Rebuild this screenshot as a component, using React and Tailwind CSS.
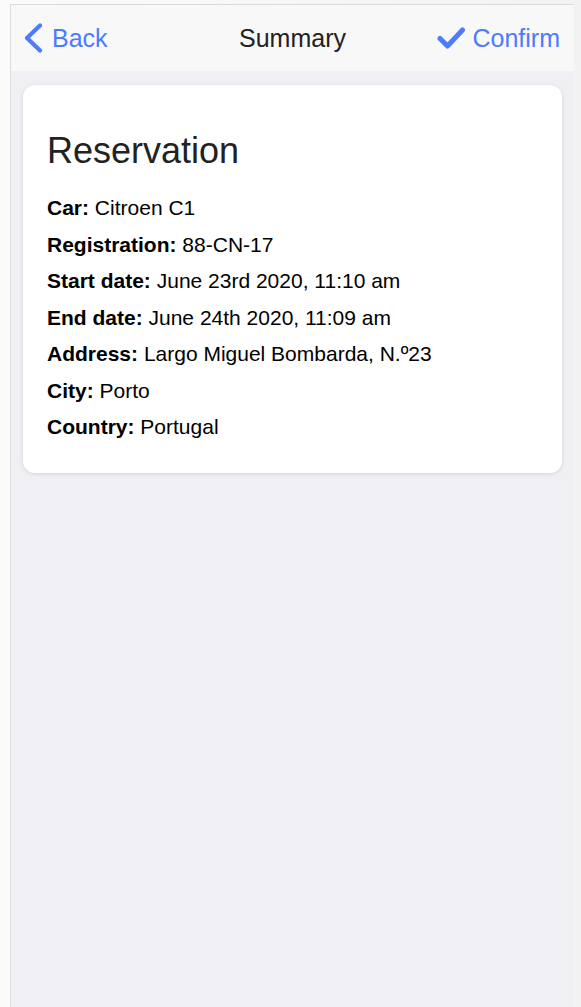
/**
 * App.jsx
 * Reservation summary screen — header with Back / Confirm,
 * and a single card listing the reservation details.
 */

const DETAILS = [
  { label: "Car:",          value: "Citroen C1" },
  { label: "Registration:", value: "88-CN-17" },
  { label: "Start date:",   value: "June 23rd 2020, 11:10 am" },
  { label: "End date:",     value: "June 24th 2020, 11:09 am" },
  { label: "Address:",      value: "Largo Miguel Bombarda, N.º23" },
  { label: "City:",         value: "Porto" },
  { label: "Country:",      value: "Portugal" },
];

export default function App() {
  return (
    <div
      className="min-h-[1007px] bg-gradient-to-r from-[#fbfbfb] to-[#f2f2f2] pt-[4px] pl-[10px] pr-[7px]"
      style={{ fontFamily: '"Liberation Sans", Arial, sans-serif' }}
    >
      <div className="flex min-h-[1003px] flex-col border-l border-t border-[#dcdcdc] bg-[#efeff4]">

        {/* ── Header ─────────────────────────────── */}
        <header className="relative flex h-[66px] items-center justify-between bg-[#f8f8f8] pt-[2px] pl-[12px] pr-[14px]">
          <button className="flex items-center gap-[9px] text-[25px] text-[#4c7bfd]">
            <svg width="20" height="30" viewBox="0 0 20 30" fill="none" className="-mt-[2px]">
              <polyline
                points="17,2.5 4,15 17,27.5"
                stroke="#4c7bfd"
                strokeWidth="4.2"
                strokeLinecap="round"
                strokeLinejoin="round"
              />
            </svg>
            <span>Back</span>
          </button>

          <h1 className="absolute left-1/2 top-[2px] flex h-[64px] -translate-x-1/2 items-center text-[25px] text-[#222]">
            Summary
          </h1>

          <button className="flex items-center gap-[7px] text-[25px] text-[#4c7bfd]">
            <svg width="28" height="22" viewBox="0 0 28 22" fill="none" className="-mt-[2px]">
              <polyline
                points="3,11.5 10.5,19 25.5,3"
                stroke="#4c7bfd"
                strokeWidth="5"
                strokeLinecap="round"
                strokeLinejoin="round"
              />
            </svg>
            <span>Confirm</span>
          </button>
        </header>

        {/* ── Reservation card ───────────────────── */}
        <div className="px-[12px] pt-[14px]">
          <div className="rounded-[12px] bg-white px-[24px] pt-[45px] pb-[27px] shadow-[0_1px_4px_rgba(0,0,0,0.12)]">
            <h2 className="text-[36px] leading-[41px] text-[#222]">Reservation</h2>
            <div className="mt-[19px]">
              {DETAILS.map(({ label, value }) => (
                <p key={label} className="text-[21px] leading-[36.5px] text-black">
                  <b>{label}</b> {value}
                </p>
              ))}
            </div>
          </div>
        </div>
      </div>
    </div>
  );
}
